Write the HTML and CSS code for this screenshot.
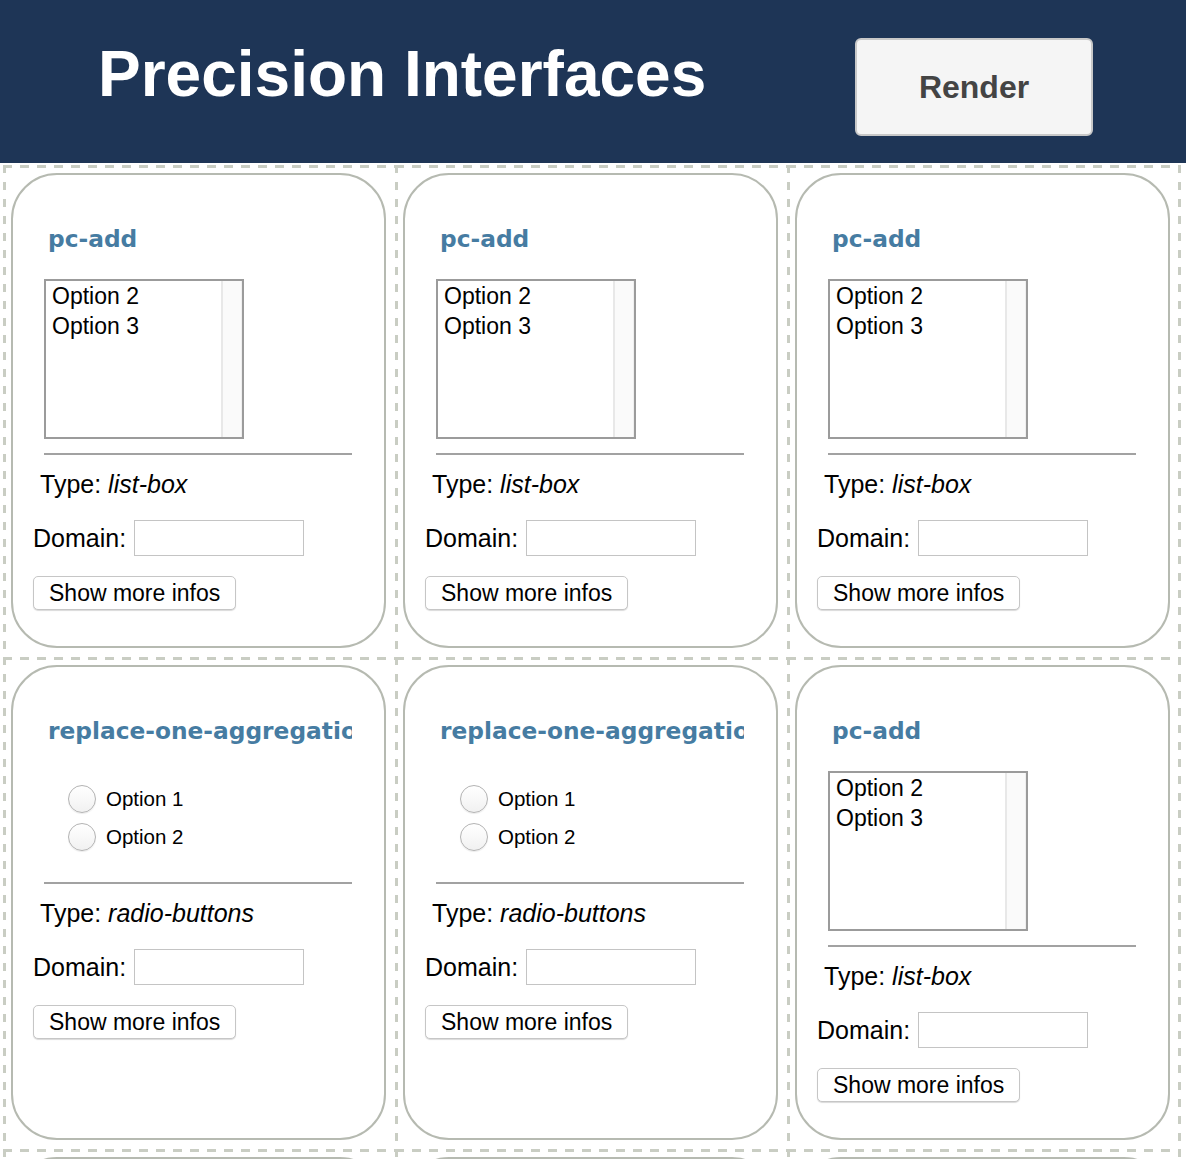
FILE: index.html
```html
<!DOCTYPE html>
<html lang="en">
<head>
    <meta charset="UTF-8">
    <title>Precision Interfaces</title>
    <link rel="stylesheet" href="styles.css">
</head>
<body>
<div class="header">
    <h1 class="title">Precision Interfaces</h1>
    <button class="render">Render</button>
</div>
<div class="grid">
    <div class="cell">
        <div class="card">
            <div class="card-title">pc-add</div>
            <div class="listbox">
                <div class="options"><div>Option 2</div><div>Option 3</div></div>
                <div class="scroll"></div>
            </div>
            <hr>
            <div class="type">Type: <i>list-box</i></div>
            <div class="domain"><span>Domain:</span><input type="text"></div>
            <button class="more">Show more infos</button>
        </div>
    </div>
    <div class="cell">
        <div class="card">
            <div class="card-title">pc-add</div>
            <div class="listbox">
                <div class="options"><div>Option 2</div><div>Option 3</div></div>
                <div class="scroll"></div>
            </div>
            <hr>
            <div class="type">Type: <i>list-box</i></div>
            <div class="domain"><span>Domain:</span><input type="text"></div>
            <button class="more">Show more infos</button>
        </div>
    </div>
    <div class="cell">
        <div class="card">
            <div class="card-title">pc-add</div>
            <div class="listbox">
                <div class="options"><div>Option 2</div><div>Option 3</div></div>
                <div class="scroll"></div>
            </div>
            <hr>
            <div class="type">Type: <i>list-box</i></div>
            <div class="domain"><span>Domain:</span><input type="text"></div>
            <button class="more">Show more infos</button>
        </div>
    </div>
    <div class="cell">
        <div class="card">
            <div class="card-title">replace-one-aggregation</div>
            <div class="radios">
                <label class="radio"><span class="dot"></span>Option 1</label>
                <label class="radio"><span class="dot"></span>Option 2</label>
            </div>
            <hr>
            <div class="type">Type: <i>radio-buttons</i></div>
            <div class="domain"><span>Domain:</span><input type="text"></div>
            <button class="more">Show more infos</button>
        </div>
    </div>
    <div class="cell">
        <div class="card">
            <div class="card-title">replace-one-aggregation</div>
            <div class="radios">
                <label class="radio"><span class="dot"></span>Option 1</label>
                <label class="radio"><span class="dot"></span>Option 2</label>
            </div>
            <hr>
            <div class="type">Type: <i>radio-buttons</i></div>
            <div class="domain"><span>Domain:</span><input type="text"></div>
            <button class="more">Show more infos</button>
        </div>
    </div>
    <div class="cell">
        <div class="card">
            <div class="card-title">pc-add</div>
            <div class="listbox">
                <div class="options"><div>Option 2</div><div>Option 3</div></div>
                <div class="scroll"></div>
            </div>
            <hr>
            <div class="type">Type: <i>list-box</i></div>
            <div class="domain"><span>Domain:</span><input type="text"></div>
            <button class="more">Show more infos</button>
        </div>
    </div>
    <div class="cell">
        <div class="card">
            <div class="card-title">pc-add</div>
            <div class="listbox">
                <div class="options"><div>Option 2</div><div>Option 3</div></div>
                <div class="scroll"></div>
            </div>
            <hr>
            <div class="type">Type: <i>list-box</i></div>
            <div class="domain"><span>Domain:</span><input type="text"></div>
            <button class="more">Show more infos</button>
        </div>
    </div>
    <div class="cell">
        <div class="card">
            <div class="card-title">pc-add</div>
            <div class="listbox">
                <div class="options"><div>Option 2</div><div>Option 3</div></div>
                <div class="scroll"></div>
            </div>
            <hr>
            <div class="type">Type: <i>list-box</i></div>
            <div class="domain"><span>Domain:</span><input type="text"></div>
            <button class="more">Show more infos</button>
        </div>
    </div>
    <div class="cell">
        <div class="card">
            <div class="card-title">pc-add</div>
            <div class="listbox">
                <div class="options"><div>Option 2</div><div>Option 3</div></div>
                <div class="scroll"></div>
            </div>
            <hr>
            <div class="type">Type: <i>list-box</i></div>
            <div class="domain"><span>Domain:</span><input type="text"></div>
            <button class="more">Show more infos</button>
        </div>
    </div>
</div>
</body>
</html>
```

FILE: styles.css
```css
* {
    margin: 0;
    padding: 0;
}

body {
    background: #ffffff;
    color: #000000;
    font-family: "Liberation Sans", Arial, sans-serif;
}

.header {
    display: flex;
    align-items: flex-start;
    height: 163px;
    box-sizing: border-box;
    padding: 38px 93px 0 98px;
    background: #1e3556;
}

.title {
    margin-top: 4px;
    font-size: 64px;
    line-height: 64px;
    font-weight: 700;
    color: #ffffff;
}

.render {
    margin-left: auto;
    width: 238px;
    height: 98px;
    border: 2px solid #c8c8c8;
    border-radius: 6px;
    background: #f5f5f5;
    font: 700 32px "Liberation Sans", Arial, sans-serif;
    color: #444444;
}

/* one dashed cell per widget, lines drawn on top and left */
.grid {
    display: grid;
    grid-template-columns: 392px 392px 394px;
    margin-top: 2px;
    padding-left: 3px;
}

.cell {
    padding: 8px 9px 9px 8px;
    background-image:
        repeating-linear-gradient(90deg, #c9cdc3 0 9px, transparent 9px 17px),
        repeating-linear-gradient(180deg, #c9cdc3 0 8px, transparent 8px 17px);
    background-size: 100% 3px, 3px 100%;
    background-position: left top, left top;
    background-repeat: no-repeat;
}

.cell:nth-child(3n) {
    padding-right: 11px;
    background-image:
        repeating-linear-gradient(90deg, #c9cdc3 0 9px, transparent 9px 17px),
        repeating-linear-gradient(180deg, #c9cdc3 0 8px, transparent 8px 17px),
        repeating-linear-gradient(180deg, #c9cdc3 0 8px, transparent 8px 17px);
    background-size: 100% 3px, 3px 100%, 3px 100%;
    background-position: left top, left top, right top;
}

.card {
    height: 475px;
    box-sizing: border-box;
    border: 2px solid #b6bab1;
    border-radius: 46px;
    padding: 0 32px 0 31px;
    overflow: hidden;
}

.card-title {
    margin-top: 49px;
    padding-left: 4px;
    font: 700 23.3px/30px "DejaVu Sans", sans-serif;
    color: #467ca2;
    white-space: nowrap;
    overflow: hidden;
}

.listbox {
    display: flex;
    width: 200px;
    height: 160px;
    box-sizing: border-box;
    margin-top: 25px;
    border: 2px solid #9b9b9b;
    font-size: 23px;
    line-height: 30px;
}

.listbox > .options {
    flex: 1;
    padding-left: 6px;
}

.listbox > .scroll {
    width: 18px;
    background: #fafafa;
    border-left: 2px solid #e8e8e8;
    border-right: 1px solid #efefef;
}

.radios {
    margin: 39px 0 31px 0;
    padding-left: 24px;
}

.radio {
    display: flex;
    align-items: center;
    height: 28px;
    font-size: 20.5px;
}

.radio + .radio {
    margin-top: 10px;
}

.radio > .dot {
    width: 28px;
    height: 28px;
    box-sizing: border-box;
    margin-right: 10px;
    border: 1px solid #b3b3b3;
    border-radius: 50%;
    background: linear-gradient(#ffffff, #f1f1f1);
    box-shadow: 0 1px 1px rgba(0, 0, 0, 0.08);
}

hr {
    margin-top: 14px;
    border: 0;
    border-top: 2px solid #a2a2a2;
}

.type {
    margin: 14px 0 0 -4px;
    font-size: 25px;
    line-height: 30px;
}

.domain {
    display: flex;
    align-items: center;
    margin: 21px 0 0 -11px;
    font-size: 25px;
}

.domain > input {
    width: 170px;
    height: 36px;
    box-sizing: border-box;
    margin-left: 8px;
    border: 1px solid #c4c4c4;
}

.more {
    display: block;
    height: 34px;
    margin: 20px 0 0 -11px;
    padding: 0 15px;
    border: 1px solid #c6c6c6;
    border-radius: 5px;
    background: #ffffff;
    box-shadow: 0 1px 1px rgba(0, 0, 0, 0.15);
    font: 23px "Liberation Sans", Arial, sans-serif;
    color: #000000;
}
```
